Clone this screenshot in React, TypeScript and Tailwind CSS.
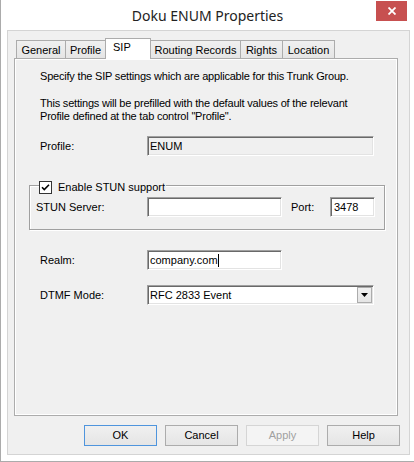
import React from "react";

// 3D sunken edit frame used by the text boxes and the combo box
const sunken =
  "border border-t-[#a0a0a0] border-l-[#a0a0a0] border-r-white border-b-white shadow-[inset_1px_1px_0_#696969,inset_-1px_-1px_0_#e3e3e3]";

type Tab = { label: string; cls: string; active?: boolean };

const tabs: Tab[] = [
  { label: "General", cls: "w-[49px] border-l" },
  { label: "Profile", cls: "w-[40px] border-l" },
  { label: "SIP", cls: "w-[46px] border-l border-r", active: true },
  { label: "Routing Records", cls: "w-[89px]" },
  { label: "Rights", cls: "w-[42px] border-l" },
  { label: "Location", cls: "w-[53px] border-l border-r" },
];

const TabStrip = () => (
  <div className="mt-[7px] ml-[8px] flex items-end h-[20px]">
    {tabs.map((t) =>
      t.active ? (
        <div
          key={t.label}
          className={`${t.cls} relative z-10 -mb-px h-[21px] border-t border-[#acacac] bg-white pt-[2px] pl-[7px] leading-[13px]`}
        >
          {t.label}
        </div>
      ) : (
        <div
          key={t.label}
          className={`${t.cls} h-[18px] border-t border-[#acacac] bg-gradient-to-b from-[#f0f0f0] to-[#e5e5e5] pt-[3px] text-center leading-[13px] whitespace-nowrap`}
        >
          {t.label}
        </div>
      )
    )}
  </div>
);

const Row = ({ label, children, className = "" }: { label: string; children: React.ReactNode; className?: string }) => (
  <div className={`ml-[25px] flex items-center h-[20px] ${className}`}>
    <span className="w-[107px] leading-[13px]">{label}</span>
    {children}
  </div>
);

const Checkbox = () => (
  <svg width="13" height="13" viewBox="0 0 13 13" className="shrink-0">
    <rect x="0.5" y="0.5" width="12" height="12" fill="white" stroke="#333" />
    <path d="M3 6.2 5.3 8.6 10 3.8" fill="none" stroke="#000" strokeWidth="1.6" />
  </svg>
);

const Button = ({ label, variant = "normal" }: { label: string; variant?: "default" | "normal" | "disabled" }) => {
  const look =
    variant === "default"
      ? "border-[#4f95dd] bg-gradient-to-b from-[#f0f0f0] to-[#e5e5e5] text-black"
      : variant === "disabled"
      ? "border-[#d5d5d5] bg-[#f4f4f4] text-[#a0a0a0]"
      : "border-[#acacac] bg-gradient-to-b from-[#f0f0f0] to-[#e5e5e5] text-black";
  return (
    <button className={`w-[73px] h-[21px] border ${look} flex items-center justify-center leading-[13px]`}>
      {label}
    </button>
  );
};

export default function App() {
  return (
    <div className="w-[414px] h-[462px] bg-white border-l border-b border-[#ababab] font-['Liberation_Sans',Arial,sans-serif] text-[11px] text-black">
      {/* title bar */}
      <div className="relative h-[30px] flex items-center justify-center">
        <span className="font-['Noto_Sans',sans-serif] text-[14px] text-[#222]">Doku ENUM Properties</span>
        <button className="absolute right-[7px] top-[1px] w-[31px] h-[20px] bg-[#c75050] flex items-center justify-center">
          <svg width="8" height="8" viewBox="0 0 8 8">
            <path d="M0.5 0.5 7.5 7.5M7.5 0.5 0.5 7.5" stroke="white" strokeWidth="1.8" />
          </svg>
        </button>
      </div>

      {/* client area */}
      <div className="ml-[6px] w-[403px] h-[425px] border border-[#d4d4d4] bg-[#f0f0f0] flex flex-col">
        <TabStrip />

        <div className="ml-[6px] w-[384px] h-[358px] border border-[#acacac] shadow-[inset_1px_1px_0_white,inset_-1px_-1px_0_white]">
          <p className="mt-[11px] ml-[25px] leading-[13px] tracking-[-0.2px]">
            Specify the SIP settings which are applicable for this Trunk Group.
          </p>
          <p className="mt-[14px] ml-[25px] leading-[13px] tracking-[-0.2px]">
            This settings will be prefilled with the default values of the relevant
            <br />
            Profile defined at the tab control "Profile".
          </p>

          <Row label="Profile:" className="mt-[13px]">
            <div className={`w-[227px] h-[20px] bg-[#f0f0f0] ${sunken} flex items-center pl-[2px] pt-[1px] leading-[13px]`}>
              ENUM
            </div>
          </Row>

          <fieldset className="mt-[25px] ml-[14px] w-[356px] border border-[#a0a0a0] shadow-[inset_1px_1px_0_white,1px_1px_0_white] pl-[6px] pt-[7px] pb-[12px]">
            <legend className="ml-[3px] pr-[1px] h-[9px] bg-[#f0f0f0]">
              <span className="flex items-center gap-[6px] h-[13px] leading-[13px]">
                <Checkbox />
                Enable STUN support
              </span>
            </legend>
            <div className="flex items-center h-[20px]">
              <span className="w-[111px] leading-[13px]">STUN Server:</span>
              <div className={`w-[135px] h-[20px] bg-white ${sunken}`} />
              <span className="ml-[9px] w-[39px] leading-[13px]">Port:</span>
              <div className={`w-[45px] h-[20px] bg-white ${sunken} flex items-center pl-[3px] pt-[1px] leading-[13px]`}>
                3478
              </div>
            </div>
          </fieldset>

          <Row label="Realm:" className="mt-[20px]">
            <div className={`w-[135px] h-[20px] bg-white ${sunken} flex items-center pl-[2px] pt-[1px] leading-[13px]`}>
              company.com
              <span className="w-px h-[13px] bg-black" />
            </div>
          </Row>

          <Row label="DTMF Mode:" className="mt-[15px]">
            <div className={`w-[227px] h-[20px] bg-white ${sunken} flex items-center`}>
              <span className="flex-1 pl-[2px] pt-[1px] leading-[13px]">RFC 2833 Event</span>
              <span className="mr-px w-[15px] h-[16px] border border-[#acacac] bg-gradient-to-b from-[#f0f0f0] to-[#e5e5e5] flex items-center justify-center">
                <svg width="7" height="4" viewBox="0 0 7 4">
                  <path d="M0 0h7L3.5 4z" fill="#000" />
                </svg>
              </span>
            </div>
          </Row>
        </div>

        <div className="mt-[9px] pr-[9px] flex justify-end gap-[8px]">
          <Button label="OK" variant="default" />
          <Button label="Cancel" />
          <Button label="Apply" variant="disabled" />
          <Button label="Help" />
        </div>
      </div>
    </div>
  );
}
